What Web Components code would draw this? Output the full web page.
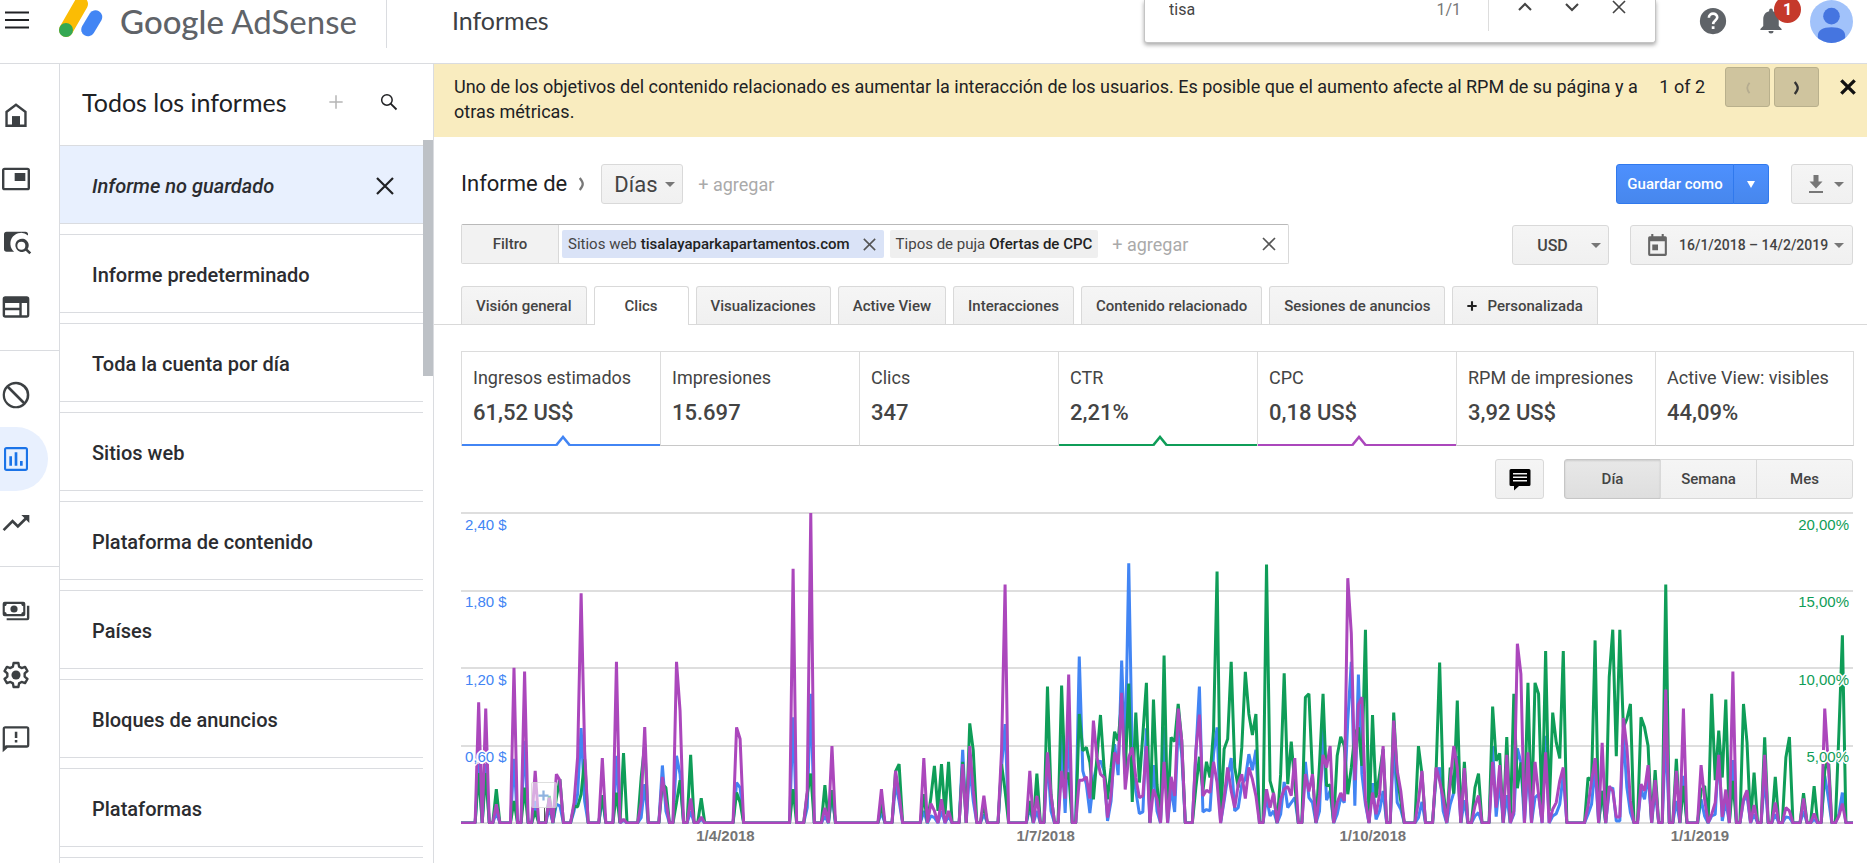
<!DOCTYPE html>
<html lang="es">
<head>
<meta charset="utf-8">
<meta name="viewport" content="width=device-width, initial-scale=1">
<title>Google AdSense – Informes</title>
<style>
html,body{margin:0;height:100%}
body{font-family:Roboto,"Liberation Sans",sans-serif;color:#202124;background:#fff;overflow:hidden}
</style>
</head>
<body>
<adsense-app></adsense-app>
<script>
const BASE = `
  *{box-sizing:border-box}
  :host{display:block}
  button,input,select{font:inherit;color:inherit;margin:0}
  button{cursor:pointer}
  .grey{background:linear-gradient(#f5f5f5,#f0f0f0);border:1px solid #d9d9d9;border-radius:3px}
  .plain{background:none;border:0;padding:0;display:flex;align-items:center;justify-content:center}
  .caret{width:0;height:0;border:5px solid transparent;border-top-color:#777;border-bottom:0;flex:none}
`;
function element(name, css, html) {
  customElements.define(name, class extends HTMLElement {
    connectedCallback() {
      if (this.shadowRoot) return;
      const root = this.attachShadow({ mode: "open" });
      const t = document.createElement("template");
      t.innerHTML = `<style>${BASE}${css}</style>${typeof html === "function" ? html(this) : html}`;
      root.append(t.content.cloneNode(true));
    }
  });
}

/* ---------- icons ---------- */
const ICONS = {
  menu: '<path d="M3 5.6h18v1.5H3zM3 11.2h18v1.5H3zM3 16.8h18v1.5H3z"/>',
  home: '<path d="M12 3.2 4 9.2V21h16V9.2zM18.2 19.2H15V13H9v6.2H5.8v-9L12 5.4l6.2 4.8z"/><path d="M9 13h6v7H9z"/>',
  ad: '<path fill-rule="evenodd" d="M3.5 3.5h17a2 2 0 0 1 2 2v13a2 2 0 0 1-2 2h-17a2 2 0 0 1-2-2v-13a2 2 0 0 1 2-2zM3.3 5.3v13.4h17.4V5.3z"/><path d="M11 7.5h8v6h-8z"/>',
  review: '<path d="M21 6.3V5.5a2 2 0 0 0-2-2H5a2 2 0 0 0-2 2v11a2 2 0 0 0 2 2h5.600a6.200 6.200 0 1 1 10.400-12.200z"/><path d="M20.700 16.500a5 5 0 1 0-1.400 1.400l2.700 2.600 1.400-1.400zM16 17a3 3 0 1 1 0-6 3 3 0 0 1 0 6z"/>',
  site: '<path fill-rule="evenodd" d="M4 4h16a2 2 0 0 1 2 2v12a2 2 0 0 1-2 2H4a2 2 0 0 1-2-2V6a2 2 0 0 1 2-2zM3.800 9v3.600h10.700V9zM3.800 14.400v3.800h10.700v-3.800zM16.300 9v9.200h4V9z"/>',
  block: '<path d="M12 2a10 10 0 1 0 0 20 10 10 0 0 0 0-20zM3.700 12c0-1.900.7-3.700 1.800-5.100l11.600 11.600A8.300 8.300 0 0 1 3.700 12zm14.800 5.100L6.900 5.500a8.300 8.300 0 0 1 11.600 11.600z"/>',
  bars: '<path fill-rule="evenodd" d="M5 3h14a2 2 0 0 1 2 2v14a2 2 0 0 1-2 2H5a2 2 0 0 1-2-2V5a2 2 0 0 1 2-2zM4.600 4.600v14.800h14.800V4.600zM7 10h2v7H7zM11 7h2v10h-2zM15 13.500h2V17h-2z"/>',
  trend: '<path d="m16 6 2.300 2.300-4.900 4.900-4-4L2 16.600 3.400 18l6-6 4 4 6.300-6.300L22 12V6z"/>',
  cash: '<path fill-rule="evenodd" d="M3.500 5h14a1.500 1.500 0 0 1 1.500 1.500v8a1.500 1.500 0 0 1-1.500 1.500h-14A1.500 1.500 0 0 1 2 14.500v-8A1.500 1.500 0 0 1 3.500 5zM5 6.700c0 1-.6 1.600-1.400 1.600v4.400c.8 0 1.400.6 1.400 1.600h11c0-1 .6-1.600 1.400-1.600V8.300c-.8 0-1.400-.6-1.400-1.600z"/><circle cx="10.500" cy="10.500" r="2.700"/><path d="M20.200 8H22v9.500a1.500 1.500 0 0 1-1.500 1.500H5v-1.600h15.200z"/>',
  gear: '<path fill="none" stroke="currentColor" stroke-width="1.800" stroke-linejoin="round" d="M10.200 3h3.600l.5 2.700 1.900 1.100 2.600-.9 1.800 3.100-2.100 1.800v2.400l2.100 1.800-1.800 3.100-2.600-.9-1.900 1.100-.5 2.700h-3.600l-.5-2.700-1.900-1.100-2.600.9L3.400 15l2.100-1.800v-2.400L3.400 9l1.800-3.100 2.600.9 1.900-1.100z"/><circle cx="12" cy="12" r="3.400"/>',
  feedback: '<path fill-rule="evenodd" d="M4 2.500h16a2 2 0 0 1 2 2v12a2 2 0 0 1-2 2H5.800L2 22V4.500a2 2 0 0 1 2-2zM3.700 4.200v13l.6-.500h16V4.200zM11.100 6.500h1.900v4.800h-1.900zM11.100 12.700h1.900v1.900h-1.900z"/>',
  search: '<circle cx="9.500" cy="9.500" r="6.300" fill="none" stroke="currentColor" stroke-width="1.800"/><path d="m14 14 7 7" stroke="currentColor" stroke-width="2.200"/>',
  plus: '<path d="M12 4v16M4 12h16" stroke="currentColor" stroke-width="1.800"/>',
  boldplus: '<path d="M12 4v16M4 12h16" stroke="currentColor" stroke-width="3.600"/>',
  close: '<path d="M4 4l16 16M20 4 4 20" stroke="currentColor" stroke-width="2.200"/>',
  boldclose: '<path d="M4 4l16 16M20 4 4 20" stroke="currentColor" stroke-width="4"/>',
  up: '<path d="m4 16 8-8 8 8" fill="none" stroke="currentColor" stroke-width="2.800"/>',
  down: '<path d="m4 8 8 8 8-8" fill="none" stroke="currentColor" stroke-width="2.800"/>',
  left: '<path d="M14 5q-3 4-3 7t3 7" fill="none" stroke="currentColor" stroke-width="2.400"/>',
  right: '<path d="M9 4q4 5 4 8t-4 8" fill="none" stroke="currentColor" stroke-width="3"/>',
  help: '<circle cx="12" cy="12" r="10.500"/><path d="M8.700 9.400c0-4.400 6.700-4.200 6.700-.3 0 2.500-3.300 2.600-3.300 5.400" fill="none" stroke="#fff" stroke-width="2.100"/><path fill="#fff" d="M11 16.200h2.200v2.200H11z"/>',
  bell: '<path d="M12 22a2 2 0 0 0 2-2h-4a2 2 0 0 0 2 2zm6.200-6V10.500c0-3.200-1.700-5.700-4.700-6.400V3.500a1.500 1.500 0 0 0-3 0v.6c-3 .7-4.700 3.200-4.700 6.400V16L3.500 18.300v.9h17v-.9z"/>',
  download: '<path d="M9.500 3h5v6.500h4L12 16.500 5.500 9.500h4zM5 19h14v2H5z"/>',
  calendar: '<path fill-rule="evenodd" d="M6 1h2v2h8V1h2v2h1.500A1.500 1.500 0 0 1 21 4.500v16a1.500 1.500 0 0 1-1.500 1.500h-15A1.500 1.500 0 0 1 3 20.500v-16A1.500 1.500 0 0 1 4.500 3H6zM5 8v12h14V8zM7 11h5.500v5.500H7z"/>',
  comment: '<path fill-rule="evenodd" d="M3 2h18a1.500 1.500 0 0 1 1.500 1.500v14A1.500 1.500 0 0 1 21 19H11l-5 4.500V19H3a1.500 1.500 0 0 1-1.500-1.500v-14A1.500 1.500 0 0 1 3 2zM5 6v1.500h14V6zM5 9.500V11h14V9.500zM5 13v1.500h14V13z"/>'
};
element("ui-icon", `:host{display:inline-flex;width:24px;height:24px;flex:none}svg{width:100%;height:100%;fill:currentColor;display:block;overflow:visible}`,
  h => `<svg viewBox="0 0 24 24" aria-hidden="true">${ICONS[h.getAttribute("name")]}</svg>`);

/* ---------- header ---------- */
element("brand-logo", `
  :host{display:flex;align-items:center;height:64px}
  a{display:flex;align-items:flex-start;color:#5f6368;text-decoration:none;height:64px}
  svg{width:44px;height:40px}
  span{font:33px/42px Lato,sans-serif;margin:0 0 0 17px;white-space:nowrap}
  b{font-weight:500}`,
  `<a href="#"><svg viewBox="0 0 44 40" aria-hidden="true">
    <path d="M7 30 22 4" stroke="#fbbc04" stroke-width="14" stroke-linecap="round"/>
    <circle cx="7" cy="30" r="7" fill="#34a853"/>
    <path d="M29 29.500 36.500 17" stroke="#4285f4" stroke-width="13.500" stroke-linecap="round"/></svg>
    <span><b>Google</b> AdSense</span></a>`);

element("find-bar", `
  :host{display:flex;width:512px;height:43px;background:#fff;border:1px solid #c4c4c4;border-top:0;border-radius:0 0 3px 3px;box-shadow:0 2px 4px rgba(0,0,0,.35);padding:0 26px 11px 24px;align-items:stretch;color:#5f6368}
  input{border:0;outline:0;flex:1;min-width:0;font-size:16px;height:20px;line-height:19px;padding:0 0 1px;color:#444}
  output{font-size:16px;line-height:19px;margin:0 27px 0 0;color:#777}
  nav{border-left:1px solid #ddd;display:flex;gap:27px;padding-left:26px;align-items:flex-start}
  nav button{margin-top:-5px;width:20px;height:24px;color:#444}
  ui-icon{width:18px;height:18px}`,
  `<input aria-label="Buscar en la página" value="tisa"><output>1/1</output>
   <nav><button class="plain" aria-label="Anterior"><ui-icon name="up"></ui-icon></button><button class="plain" aria-label="Siguiente"><ui-icon name="down"></ui-icon></button><button class="plain" aria-label="Cerrar"><ui-icon name="close"></ui-icon></button></nav>`);

element("app-header", `
  :host{display:flex;height:64px;border-bottom:1px solid #dadce0;align-items:flex-start;padding:0 14px 0 1px;position:relative}
  .menu{width:32px;height:40px}.menu ui-icon{width:32px;height:32px}
  brand-logo{margin-left:26px}
  h1{margin:0 0 0 29px;border-left:1px solid #dadce0;height:48px;padding-left:65px;font:25px/40px Lato,sans-serif;color:#3c4043}
  .end{margin-left:auto;display:flex;align-items:center;height:42px;color:#5f6368}
  .end ui-icon{width:30px;height:30px}
  .bell{position:relative;margin:0 24px 0 28px}
  .badge{position:absolute;left:18px;top:-10px;width:27px;height:27px;border-radius:50%;background:#c5392b;color:#fff;font:700 16px/27px Roboto,sans-serif;text-align:center}
  .avatar svg{width:43px;height:43px;display:block}
  find-bar{position:absolute;right:211px;top:0}`,
  `<button class="plain menu" aria-label="Menú"><ui-icon name="menu"></ui-icon></button>
   <brand-logo></brand-logo><h1>Informes</h1>
   <div class="end"><button class="plain" aria-label="Ayuda"><ui-icon name="help"></ui-icon></button>
   <button class="plain bell" aria-label="Notificaciones"><ui-icon name="bell"></ui-icon><span class="badge">1</span></button>
   <button class="plain avatar" aria-label="Cuenta"><svg viewBox="0 0 44 44"><defs><clipPath id="c"><circle cx="22" cy="22" r="22"/></clipPath></defs><g clip-path="url(#c)"><path fill="#a1c2fa" d="M0 0h44v44H0z"/><circle cx="22" cy="16.500" r="8.500" fill="#4575e0"/><path fill="#4575e0" d="M8 44v-7q0-9 14-9t14 9v7z"/></g></svg></button></div>
   <find-bar></find-bar>`);

/* ---------- navigation rail ---------- */
element("nav-rail", `
  :host{width:60px;border-right:1px solid #dadce0;padding-top:19px;flex:none;overflow:hidden;color:#3c4043}
  a{display:flex;align-items:center;height:64px;width:48px;color:inherit}
  ui-icon{width:32px;height:32px}
  .on{background:#e8f0fe;border-radius:0 32px 32px 0;color:#1a73e8}
  hr{border:0;border-top:1px solid #dadce0;margin:11px 0 12px}`,
  () => {
    const a = (i, l, c = "") => `<a href="#" class="${c}" aria-label="${l}"><ui-icon name="${i}"></ui-icon></a>`;
    return `<nav>${a("home","Inicio")}${a("ad","Anuncios")}${a("review","Revisión")}${a("site","Sitios")}<hr>
    ${a("block","Controles")}${a("bars","Informes","on")}${a("trend","Optimización")}<hr>
    ${a("cash","Pagos")}${a("gear","Cuenta")}${a("feedback","Comentarios")}</nav>`;
  });

/* ---------- report list ---------- */
element("report-list", `
  :host{display:grid;grid-template-columns:1fr 10px;grid-template-rows:81px 1fr;width:374px;flex:none;border-right:1px solid #dadce0;overflow:hidden}
  header{display:flex;align-items:center;padding:0 22px 6px 22px}
  h2{font:25px/32px Lato,sans-serif;margin:0 auto 0 0;white-space:nowrap}
  header button{width:24px;height:24px}
  .add{color:#b5b5b5;margin-right:29px}.add ui-icon{width:20px;height:20px}
  .find ui-icon{width:20px;height:20px}
  .thumb{grid-column:2;grid-row:1/3;height:236px;margin-top:76px;background:#bdc1c6}
  ul{list-style:none;margin:0;padding:0;display:flex;flex-direction:column;gap:10px;overflow:hidden;grid-column:1}
  li{flex:none;height:79px;border:1px solid #dadce0;border-width:1px 0;display:flex;align-items:center;padding:2px 26px 0 32px;justify-content:space-between}
  a{color:#2b2c30;text-decoration:none;font-size:20px;line-height:24px;font-weight:500}
  .on{background:#e8f0fe}.on a{font-style:italic}`,
  `<header><h2>Todos los informes</h2><button class="plain add" aria-label="Nuevo"><ui-icon name="plus"></ui-icon></button><button class="plain find" aria-label="Buscar"><ui-icon name="search"></ui-icon></button></header>
   <div class="thumb"></div>
   <ul><li class="on"><a href="#">Informe no guardado</a><button class="plain" aria-label="Cerrar"><ui-icon name="close"></ui-icon></button></li>
   ${["Informe predeterminado","Toda la cuenta por día","Sitios web","Plataforma de contenido","Países","Bloques de anuncios","Plataformas",""].map(t => `<li>${t ? `<a href="#">${t}</a>` : ""}</li>`).join("")}</ul>`);

/* ---------- notice ---------- */
element("notice-banner", `
  :host{display:flex;align-items:flex-start;background:#f9ecbf;min-height:73px;padding:0 7px 0 20px;font-size:18px;line-height:25px}
  p{margin:10px 0 0;flex:1;max-width:1192px}
  span{margin:10px 20px 0 auto;white-space:nowrap}
  .pg{width:45px;height:40px;margin:3px 4px 0 0;border:1px solid #b9b08c;border-radius:3px;background:#cfc49e;color:#333;padding:0}
  .pg[disabled]{color:#b5ac90}
  .x{width:24px;height:40px;margin:3px 0 0 13px;color:#111}
  .pg ui-icon{width:18px;height:18px;margin-top:8px}.x ui-icon{width:20px;height:20px}`,
  `<p><slot></slot></p><span>1 of 2</span><button class="pg" disabled aria-label="Anterior"><ui-icon name="left"></ui-icon></button><button class="pg" aria-label="Siguiente"><ui-icon name="right"></ui-icon></button><button class="plain x" aria-label="Cerrar"><ui-icon name="boldclose"></ui-icon></button>`);

/* ---------- drop-down ---------- */
element("drop-down", `
  :host{display:inline-grid;align-items:center;height:40px}
  select{grid-area:1/1;appearance:none;height:40px;width:100%;padding:0 var(--end,24px) 0 12px;outline:0}
  .caret{grid-area:1/1;justify-self:end;margin-right:8px;pointer-events:none}`,
  h => `<select class="grey" aria-label="${h.getAttribute("label")}"><option>${h.getAttribute("value")}</option></select><i class="caret"></i>`);

/* ---------- title row ---------- */
element("report-title", `
  :host{display:flex;align-items:center;height:40px}
  h2{font-size:22px;line-height:24px;font-weight:400;margin:0;white-space:nowrap}
  .chev{width:18px;height:18px;color:#777;margin:0 10px 0 6px}
  drop-down{font-size:22px;width:82px;color:#444}
  .add{color:#aaa;font-size:18px;margin-left:15px}
  .save{margin-left:auto;display:flex;height:40px;color:#fff}
  .save button{background:linear-gradient(#4d90fe,#4787ed);border:1px solid #3079ed;padding:0;display:flex;align-items:center;justify-content:center}
  .save button:first-child{width:118px;border-radius:3px 0 0 3px;font-size:15px;font-weight:500}
  .save button:last-child{width:36px;margin-left:-1px;border-radius:0 3px 3px 0}
  .save .caret{border-top:7px solid #fff;border-left-width:4px;border-right-width:4px}
  .dl{width:62px;height:40px;margin-left:22px;display:flex;align-items:center;justify-content:space-between;padding:0 8px 0 12px;color:#777}
  .dl ui-icon{width:24px;height:24px}`,
  `<h2>Informe de</h2><ui-icon class="chev" name="right"></ui-icon><drop-down label="Dimensión" value="Días"></drop-down><button class="plain add">+ agregar</button>
   <div class="save"><button>Guardar como</button><button aria-label="Más opciones"><i class="caret"></i></button></div>
   <button class="grey dl" aria-label="Descargar"><ui-icon name="download"></ui-icon><i class="caret"></i></button>`);

/* ---------- filter row ---------- */
element("report-filter", `
  :host{display:flex;align-items:flex-start;height:41px;font-size:15px}
  .box{display:flex;align-items:center;width:828px;height:40px;border:1px solid #d9d9d9;border-top-color:#b9b9b9;border-radius:2px}
  .label{width:97px;height:38px;line-height:38px;text-align:center;background:#f2f2f2;border-right:1px solid #d9d9d9;font-weight:500;color:#444}
  .chip{display:flex;align-items:center;height:28px;border-radius:2px;background:#efefef;padding:0 6px;margin-left:6px;color:#444;white-space:nowrap;line-height:28px}
  .chip b{font-weight:500;color:#222;margin-left:4px}
  .on{background:#dae3f7;margin-left:3px}
  .chip ui-icon{width:17px;height:17px;margin-left:11px;color:#555}
  .add{font-size:18px;color:#aaa;margin-left:14px}
  .clear{margin-left:auto;margin-right:10px;color:#555}.clear ui-icon{width:18px;height:18px}
  .right{margin:1px 0 0 auto;display:flex;gap:21px;font-weight:500;color:#444}
  drop-down{width:97px;--end:28px;text-align-last:center;font-size:16px}
  .date{height:40px;width:223px;display:flex;align-items:center;padding:0 8px 0 14px;font-weight:500;font-size:14px;white-space:nowrap}
  .date span{margin:0 auto 0 9px}
  .date ui-icon{width:25px;height:25px;color:#666}`,
  `<div class="box"><span class="label">Filtro</span>
   <span class="chip on">Sitios web <b>tisalayaparkapartamentos.com</b><button class="plain" aria-label="Quitar"><ui-icon name="close"></ui-icon></button></span>
   <span class="chip">Tipos de puja <b>Ofertas de CPC</b></span><button class="plain add">+ agregar</button><button class="plain clear" aria-label="Borrar"><ui-icon name="close"></ui-icon></button></div>
   <div class="right"><drop-down label="Moneda" value="USD"></drop-down><button class="grey date"><ui-icon name="calendar"></ui-icon><span>16/1/2018 – 14/2/2019</span><i class="caret"></i></button></div>`);

/* ---------- tabs ---------- */
element("report-tabs", `
  :host{display:flex;gap:7px;border-bottom:1px solid #d9d9d9;padding-left:27px}
  button{height:38px;padding:0 14px;font-size:15px;font-weight:500;color:#444;border-bottom:0!important;border-radius:3px 3px 0 0!important;display:flex;align-items:center;white-space:nowrap}
  [aria-selected=true]{background:#fff;height:39px;margin-bottom:-1px;padding:0 30px}
  ui-icon{width:14px;height:14px;margin-right:8px;color:#222;margin-left:-2px}`,
  `${["Visión general","Clics","Visualizaciones","Active View","Interacciones","Contenido relacionado","Sesiones de anuncios"].map(t => `<button role="tab" class="grey" aria-selected="${t === "Clics"}">${t}</button>`).join("")}<button role="tab" class="grey"><ui-icon name="boldplus"></ui-icon>Personalizada</button>`);

/* ---------- metric cards ---------- */
element("metric-card", `
  :host{position:relative;display:block;height:95px;border:1px solid #dcdcdc;border-right-width:0;border-bottom-color:#c8c8c8;padding:13px 0 0 11px;color:#444;white-space:nowrap}
  :host(:last-child){border-right-width:1px}
  .n{font-size:18px;line-height:25px}.v{font-size:22px;line-height:26px;margin-top:10px;font-weight:500}
  i{position:absolute;left:0;right:0;bottom:-1px;height:2px}
  svg{position:absolute;left:calc(50% + 2px);bottom:-1px;margin-left:-10px}`,
  h => {
    const c = h.getAttribute("color");
    return `<div class="n"><slot></slot></div><div class="v">${h.getAttribute("value")}</div>` +
      (c ? `<i style="background:${c}"></i><svg width="20" height="11" viewBox="0 0 20 11" aria-hidden="true"><path d="M3 11 10 1l7 10z" fill="#fff"/><path d="m3 10.500 7-8.500 7 8.500" fill="none" stroke="${c}" stroke-width="2.600"/></svg>` : "");
  });
element("metric-cards", `:host{display:grid;grid-template-columns:repeat(7,1fr)}`,
  `<metric-card value="61,52 US$" color="#4285f4">Ingresos estimados</metric-card><metric-card value="15.697">Impresiones</metric-card><metric-card value="347">Clics</metric-card><metric-card value="2,21%" color="#0f9d58">CTR</metric-card><metric-card value="0,18 US$" color="#ab47bc">CPC</metric-card><metric-card value="3,92 US$">RPM de impresiones</metric-card><metric-card value="44,09%">Active View: visibles</metric-card>`);

element("chart-controls", `
  :host{display:flex;justify-content:flex-end;gap:20px;font-size:15px;color:#444}
  .note{width:49px;height:40px;display:flex;align-items:center;justify-content:center;color:#000;padding:0}
  .note ui-icon{width:24px;height:24px}
  .seg{display:flex}
  .seg button{width:97px;height:40px;font-weight:500;border-radius:0;margin-left:-1px;padding:0}
  .seg button:first-child{border-radius:3px 0 0 3px;margin-left:0}.seg button:last-child{border-radius:0 3px 3px 0}
  .seg [aria-pressed=true]{background:linear-gradient(#e8e8e8,#dedede);border-color:#c6c6c6;box-shadow:inset 0 1px 2px rgba(0,0,0,.12)}`,
  `<button class="grey note" aria-label="Notas"><ui-icon name="comment"></ui-icon></button><div class="seg"><button class="grey" aria-pressed="true">Día</button><button class="grey" aria-pressed="false">Semana</button><button class="grey" aria-pressed="false">Mes</button></div>`);

/* ---------- chart ----------
   395 daily samples. Each block starts at a plot offset and lists "position:level"
   for the active days; level 966 is zero and 39 is the top of the scale. */
const OFFSETS = [-33, 1017, 2067, 3117];
const SERIES = [
 ["#4285f4", [
  "88:790 109:790 141:935 193:774 225:720 257:900 299:920 321:910 331:915 374:930 384:880 394:682 405:900 458:890 501:765 522:958 575:950 586:850 639:794 650:930 681:765 691:820 723:930 755:955 861:845 872:860 1030:650 1073:920",
  "33:580 76:945 97:880 245:935 287:850 298:900 372:930 393:945 403:950 425:930 446:945 488:747 510:800 520:900 552:940 605:800 616:670 690:920 711:930 742:770 753:930 785:702 796:936 806:690 838:468 849:810 859:850 870:936 880:840 891:790 901:780 912:810 922:960 933:900 944:730 954:823 965:480 976:770 986:189 997:770 1007:870 1018:938 1028:933 1039:683",
  "10:793 21:930 42:680 64:860 74:933 85:680 95:760 138:760 148:558 159:933 169:926 180:930 190:760 201:680 222:900 233:830 243:772 254:930 265:920 275:850 286:835 296:760 307:808 317:747 349:890 360:945 371:930 392:940 402:843 413:920 424:905 434:890 466:783 477:890 487:905 509:930 519:680 529:898 540:870 561:940 571:890 582:905 592:660 603:484 614:914 625:522 635:820 646:910 667:847 678:955 688:930 699:870 730:730 741:905 752:925 804:950 815:903 857:825 868:800 879:930 900:910 911:875 921:766 942:898 974:945 985:935 1027:736 1038:947 1048:840",
  "19:883 40:940 51:743 62:785 83:800 104:890 115:880 136:705 157:945 168:938 178:910 189:820 263:940 273:910 284:800 305:870 327:870 337:860 347:960 358:960 369:700 379:860 390:935 422:865 433:895 443:820 464:870 496:700 528:900 549:825 602:895 613:945 634:945 645:940 655:755 666:960 676:900 697:778 729:900 740:885 761:940 793:830 824:940 856:948 866:950 908:930 940:955 972:825 983:890 1014:940 1025:875"]],
 ["#0f9d58", [
  "88:817 109:817 141:865 193:900 225:860 257:930 299:885 321:890 331:835 374:915 384:918 394:880 405:775 458:883 501:875 522:757 575:830 586:730 639:850 650:860 681:905 691:838 723:762 755:892 861:875 872:905 1030:865 1073:880",
  "33:818 76:853 97:868 245:910 287:812 298:790 372:880 393:890 404:795 414:930 425:790 435:940 446:783 488:783 510:668 520:750 552:910 605:790 616:870 690:900 711:818 742:558 753:880 785:555 796:840 806:815 838:640 849:750 859:740 870:785 880:895 891:770 901:643 912:800 922:895 933:800 944:693 954:720 965:600 976:820 986:549 997:903 1007:636 1018:845 1028:700 1039:547",
  "10:597 21:850 31:960 42:465 53:950 64:710 74:722 85:610 95:720 138:860 148:768 159:870 169:783 180:830 190:690 201:214 212:960 222:745 233:715 243:484 254:800 265:860 275:740 286:514 296:640 307:703 317:640 349:193 360:840 371:880 392:820 402:518 413:850 424:723 434:850 466:590 477:580 487:820 509:790 519:580 529:855 540:852 561:765 571:708 582:735 592:880 603:800 614:700 625:680 635:795 646:388 667:643 678:890 688:820 699:745 730:636 741:830 752:900 804:736 815:820 857:810 868:486 879:860 900:800 911:878 921:600 942:783 974:860 985:818 1027:618 1038:780 1048:758",
  "19:709 40:580 51:862 62:785 72:930 83:547 93:960 104:547 115:580 125:940 136:452 146:930 157:636 168:725 178:773 189:452 263:830 273:840 284:420 305:870 327:530 337:388 347:766 358:388 369:680 379:655 390:610 422:650 433:680 443:736 464:808 496:253 528:774 549:855 602:870 613:855 634:580 645:838 655:690 666:830 676:597 697:840 729:610 740:725 761:815 793:710 824:828 856:770 866:709 908:877 940:856 972:810 983:760 1014:700 1025:405"]],
 ["#ab47bc", [
  "88:605 109:624 141:910 193:502 225:513 257:810 299:890 321:820 331:838 374:905 384:770 394:279 405:750 458:772 501:484 522:955 575:905 586:679 639:828 650:900 681:484 691:630 723:893 755:948 861:680 872:715 1030:206 1073:870",
  "33:39 76:921 97:736 245:865 287:810 298:880 372:772 393:908 403:930 425:895 446:930 488:790 510:736 520:870 552:884 605:750 616:253 690:810 711:885 742:755 753:880 785:810 796:893 806:522 838:838 849:838 859:828 870:893 880:660 891:770 901:820 912:830 922:950 933:880 944:755 954:790 965:577 976:866 986:770 997:740 1007:830 1018:890 1028:885 1039:736",
  "10:865 21:895 42:783 64:828 74:885 85:624 95:720 138:750 148:642 159:885 169:868 180:875 190:783 201:845 222:890 233:800 243:870 254:920 265:850 275:820 286:893 296:800 307:835 317:885 349:865 360:920 371:876 392:895 402:865 413:857 424:884 434:772 466:820 477:872 487:820 509:880 519:762 529:800 540:736 561:905 571:876 582:900 592:234 603:400 614:838 625:612 635:590 646:900 667:875 678:940 688:880 699:736 730:660 741:810 752:870 804:900 815:810 857:800 868:840 879:890 900:840 911:736 921:800 942:802 974:915 985:884 1027:783 1038:920 1048:793",
  "19:762 40:930 51:430 62:520 83:755 104:783 115:880 136:755 157:925 168:905 178:840 189:800 263:915 273:840 284:772 305:726 327:856 337:870 347:948 358:948 369:652 379:740 390:900 422:850 433:870 443:793 464:838 496:567 528:810 549:624 602:793 613:895 634:940 645:905 655:762 666:948 676:866 697:513 729:895 740:868 761:912 793:762 824:905 856:920 866:930 908:893 940:938 972:624 983:790 1014:945 1025:908"]]
];
const STEP = 4176 / 394;
function polyline([color, blocks]) {
  const level = new Array(395).fill(966);
  blocks.forEach((b, i) => b.split(" ").forEach(p => {
    const [x, y] = p.split(":").map(Number);
    level[Math.round((x + OFFSETS[i]) / STEP)] = y;
  }));
  const pts = level.map((y, d) => `${(d * STEP / 3).toFixed(2)},${((y - 39) / 3 + 1).toFixed(2)}`).join(" ");
  return `<polyline points="${pts}" stroke="${color}"/>`;
}
element("time-chart", `
  :host{display:block;position:relative;height:334px;font-family:"Liberation Sans",Arial,sans-serif;font-size:15px;line-height:18px}
  .plot{position:relative;height:312px}
  .grid{position:absolute;inset:0;display:flex;flex-direction:column;justify-content:space-between}
  .grid i{height:2px;background:#dedede}
  svg{position:absolute;inset:0;width:100%;height:100%}
  polyline{fill:none;stroke-width:3;stroke-linejoin:bevel;vector-effect:non-scaling-stroke}
  .axis{position:absolute;top:0;display:grid;grid-template-rows:repeat(4,1fr);padding-top:4px;height:313px;
    text-shadow:0 0 1px #fff,1px 1px 0 #fff,-1px 1px 0 #fff,1px -1px 0 #fff,-1px -1px 0 #fff,2px 0 0 #fff,-2px 0 0 #fff,0 2px 0 #fff,0 -2px 0 #fff}
  .l{left:4px;color:#4285f4}.r{right:4px;color:#0f9d58;text-align:right}
  .d{position:absolute;top:315px;transform:translateX(-50%);font-weight:700;color:#757575}
  .mark{position:absolute;left:5%;top:270px;width:26px;height:26px;background:rgba(255,255,255,.55);border:1px solid rgba(200,200,200,.6);border-radius:2px;padding:0;display:grid;place-items:center;color:#8fb3e0}
  .mark ui-icon{width:15px;height:15px}
  .mark::after{content:"";position:absolute;left:12px;top:25px;width:1px;height:13px;background:#555}`,
  () => `<div class="plot"><div class="grid"><i></i><i></i><i></i><i></i><i></i></div>
   <svg viewBox="0 0 1392 311" preserveAspectRatio="none" role="img" aria-label="Ingresos, CTR y CPC por día">${SERIES.map(polyline).join("")}</svg>
   <div class="axis l"><span>2,40 $</span><span>1,80 $</span><span>1,20 $</span><span>0,60 $</span></div>
   <div class="axis r"><span>20,00%</span><span>15,00%</span><span>10,00%</span><span>5,00%</span></div>
   <button class="mark" aria-label="Agregar nota"><ui-icon name="boldplus"></ui-icon></button></div>
   <span class="d" style="left:19%">1/4/2018</span><span class="d" style="left:42%">1/7/2018</span><span class="d" style="left:65.500%">1/10/2018</span><span class="d" style="left:89%">1/1/2019</span>`);

/* ---------- page ---------- */
element("adsense-app", `
  :host{display:flex;flex-direction:column;height:100vh;overflow:hidden}
  app-header{flex:none}
  .body{display:flex;flex:1;min-height:0}
  main{flex:1;min-width:0;overflow:hidden}
  .pad{padding:0 14px 0 27px}
  report-title{margin-top:27px}
  report-filter{margin-top:20px}
  report-tabs{margin-top:21px}
  metric-cards{margin:26px -1px 0 0}
  chart-controls{margin-top:13px}
  time-chart{margin-top:13px}`,
  `<app-header></app-header><div class="body"><nav-rail></nav-rail><report-list></report-list>
   <main><notice-banner>Uno de los objetivos del contenido relacionado es aumentar la interacción de los usuarios. Es posible que el aumento afecte al RPM de su página y a otras métricas.</notice-banner>
   <div class="pad"><report-title></report-title><report-filter></report-filter></div>
   <report-tabs role="tablist"></report-tabs>
   <div class="pad"><metric-cards></metric-cards><chart-controls></chart-controls><time-chart></time-chart></div></main></div>`);
</script>
</body>
</html>
